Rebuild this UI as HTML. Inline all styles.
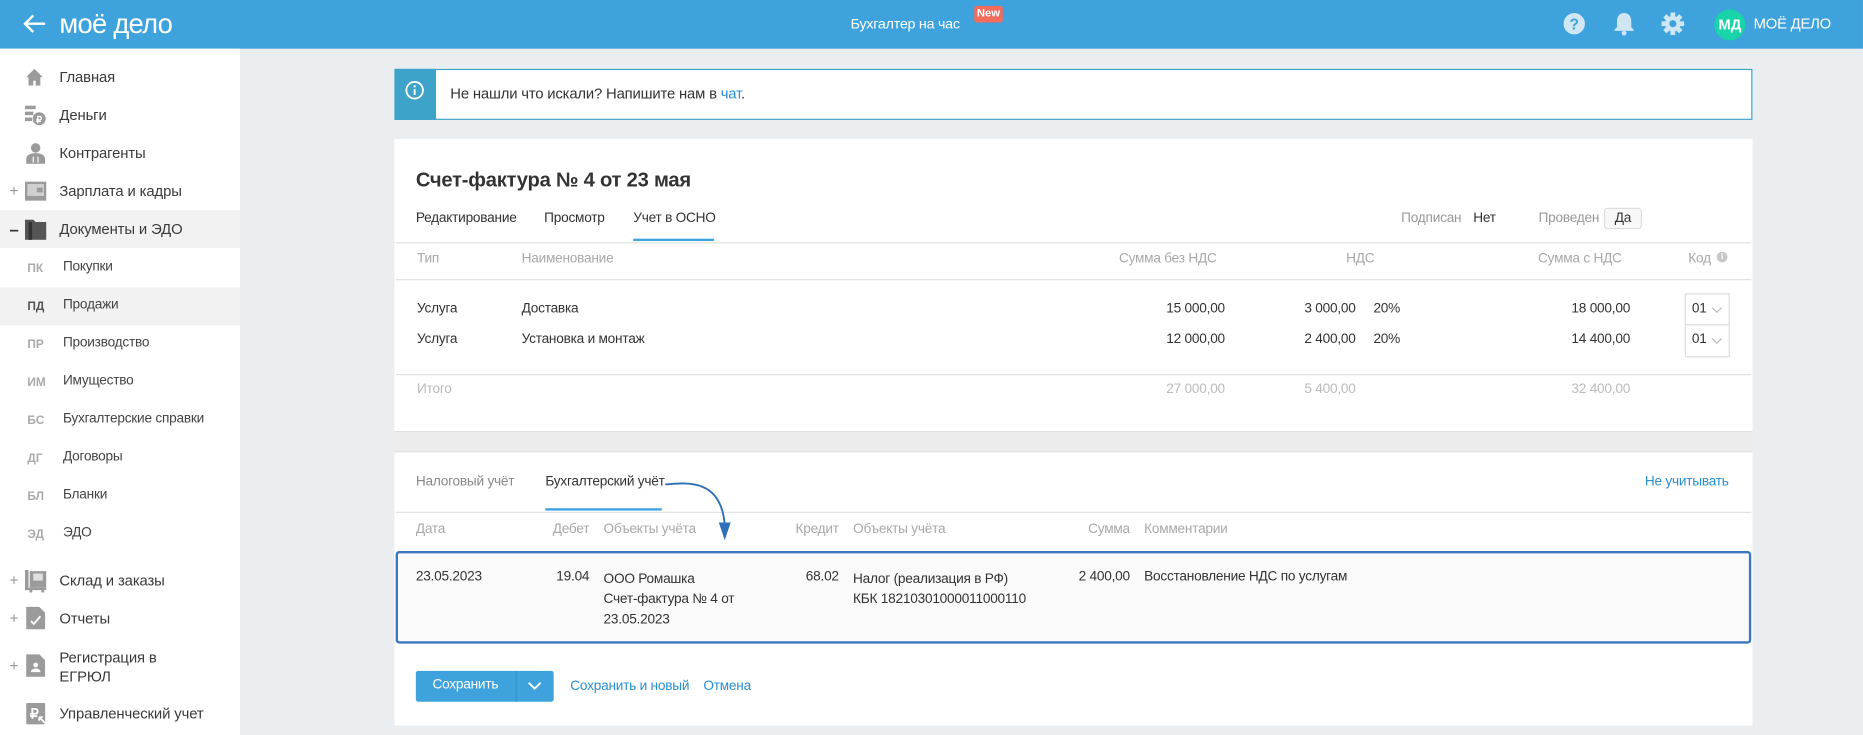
<!DOCTYPE html>
<html><head><meta charset="utf-8">
<style>
html,body{margin:0;padding:0;width:1863px;height:735px;overflow:hidden;background:#eaeef1}
#w{position:absolute;left:0;top:0;width:1568px;height:619px;transform:scale(1.1881,1.1874);transform-origin:0 0;font-family:"Liberation Sans",Arial,sans-serif;color:#333;background:#eaeef1}
.a{position:absolute;white-space:nowrap}
.r{text-align:right}
.g{color:#a8a8a8}
.b{color:#2a8fd0}
.t{font-size:11.5px;letter-spacing:-0.2px}
.sb{font-size:12.5px;color:#3a3a3a;letter-spacing:-0.1px}
.ab{font-size:10px;font-weight:bold;color:#aaa}
</style></head><body><div id="w">
<!-- header -->
<div class="a" style="left:0;top:0;width:1568px;height:41px;background:#3ea3dd"></div>
<svg class="a" style="left:18px;top:11px" width="22" height="18" viewBox="0 0 22 18"><path d="M20 9H3M10 2L3 9l7 7" stroke="#fff" stroke-width="2" fill="none"/></svg>
<div class="a" style="left:50px;top:7px;font-size:23px;color:#fff;letter-spacing:-0.6px">моё дело</div>
<div class="a" style="left:716px;top:13px;font-size:12px;color:#fff;letter-spacing:-0.2px">Бухгалтер на час</div>
<div class="a" style="left:820px;top:5px;width:24px;height:14px;background:#f26b5b;border-radius:2px;color:#fff;font-size:9.5px;font-weight:bold;text-align:center;line-height:14px">New</div>
<svg class="a" style="left:1315px;top:10px" width="20" height="20" viewBox="0 0 20 20"><circle cx="10" cy="10" r="9" fill="#cfe6f5"/><text x="10" y="15" font-size="13" font-weight="bold" fill="#3ea3dd" text-anchor="middle" font-family="Liberation Sans">?</text></svg>
<svg class="a" style="left:1358px;top:10px" width="18" height="20" viewBox="0 0 18 20"><path d="M9 1c-4 0-6 3-6 7v5l-2 2v1h16v-1l-2-2V8c0-4-2-7-6-7z" fill="#cfe6f5"/><circle cx="9" cy="18" r="2" fill="#cfe6f5"/></svg>
<svg class="a" style="left:1398px;top:10px" width="20" height="20" viewBox="0 0 20 20"><g fill="#cfe6f5"><circle cx="10" cy="10" r="6.5"/><rect x="8" y="0.5" width="4" height="19"/><rect x="0.5" y="8" width="19" height="4"/><rect x="8" y="0.5" width="4" height="19" transform="rotate(45 10 10)"/><rect x="8" y="0.5" width="4" height="19" transform="rotate(-45 10 10)"/></g><circle cx="10" cy="10" r="3" fill="#3ea3dd"/></svg>
<div class="a" style="left:1443px;top:8px;width:26px;height:26px;border-radius:50%;background:#19d4a8;color:#fff;font-size:12.5px;font-weight:bold;text-align:center;line-height:26px">МД</div>
<div class="a" style="left:1476px;top:13px;font-size:12.5px;color:#fff;letter-spacing:-0.2px">МОЁ ДЕЛО</div>
<!-- sidebar -->
<div class="a" style="left:0;top:41px;width:202px;height:578px;background:#fff"></div>
<div class="a" style="left:0;top:177px;width:202px;height:32px;background:#f2f2f2"></div>
<div class="a" style="left:0;top:242px;width:202px;height:32px;background:#f2f2f2"></div>
<svg class="a" style="left:21px;top:57px" width="16" height="16" viewBox="0 0 16 16"><path d="M8 1L1 8h2v7h4v-4h2v4h4V8h2z" fill="#9b9b9b"/></svg>
<svg class="a" style="left:21px;top:88px" width="18" height="18" viewBox="0 0 18 18"><g fill="#9b9b9b"><rect x="0" y="1" width="9" height="3"/><rect x="0" y="6" width="7" height="3"/><rect x="0" y="11" width="6" height="3"/><circle cx="12" cy="12" r="5.5"/></g><text x="12" y="15.5" font-size="8" fill="#fff" text-anchor="middle" font-family="Liberation Sans" font-weight="bold">₽</text></svg>
<svg class="a" style="left:22px;top:120px" width="16" height="18" viewBox="0 0 16 18"><g fill="#9b9b9b"><circle cx="8" cy="4.5" r="4"/><path d="M0 18v-4c0-3 3-5 8-5s8 2 8 5v4z"/></g><path d="M6 12v5M10 12v5" stroke="#fff"/></svg>
<svg class="a" style="left:21px;top:152px" width="18" height="18" viewBox="0 0 18 18"><rect x="0" y="1" width="18" height="16" fill="#9b9b9b"/><rect x="2" y="3" width="14" height="10" fill="#d0d0d0"/><rect x="10" y="6" width="5" height="4" fill="#9b9b9b"/></svg>
<svg class="a" style="left:21px;top:185px" width="18" height="17" viewBox="0 0 18 17"><path d="M0 0h7l2 2h9v15H0z" fill="#555"/><rect x="3" y="2" width="3" height="15" fill="#333"/></svg>
<svg class="a" style="left:21px;top:480px" width="18" height="19" viewBox="0 0 18 19"><rect x="0" y="0" width="3" height="16" fill="#9b9b9b"/><rect x="4" y="1" width="14" height="14" fill="#9b9b9b"/><rect x="7" y="3" width="8" height="6" fill="#e0e0e0"/><rect x="0" y="15" width="18" height="2" fill="#9b9b9b"/><circle cx="5" cy="18" r="1.3" fill="#9b9b9b"/><circle cx="15" cy="18" r="1.3" fill="#9b9b9b"/></svg>
<svg class="a" style="left:22px;top:511px" width="16" height="19" viewBox="0 0 16 19"><path d="M0 0h11l5 5v14H0z" fill="#9b9b9b"/><path d="M4 12l2.5 2.5L12 8" stroke="#fff" stroke-width="1.5" fill="none"/></svg>
<svg class="a" style="left:22px;top:551px" width="16" height="19" viewBox="0 0 16 19"><path d="M0 0h11l5 5v14H0z" fill="#9b9b9b"/><circle cx="8" cy="9" r="2" fill="#fff"/><path d="M4 15c0-2 2-3 4-3s4 1 4 3z" fill="#fff"/></svg>
<svg class="a" style="left:22px;top:592px" width="18" height="19" viewBox="0 0 18 19"><rect x="0" y="0" width="16" height="18" rx="1" fill="#9b9b9b"/><text x="7" y="13" font-size="12" fill="#fff" text-anchor="middle" font-family="Liberation Sans" font-weight="bold">₽</text><path d="M11 12l5 5M11 12h3M11 12v3" stroke="#fff" stroke-width="1.5"/></svg>
<div class="a sb" style="left:50px;top:58px">Главная</div>
<div class="a sb" style="left:50px;top:90px">Деньги</div>
<div class="a sb" style="left:50px;top:122px">Контрагенты</div>
<div class="a" style="left:8px;top:153px;color:#999;font-size:13px">+</div>
<div class="a sb" style="left:50px;top:154px">Зарплата и кадры</div>
<div class="a" style="left:8px;top:185px;color:#333;font-size:14px;font-weight:bold">–</div>
<div class="a sb" style="left:50px;top:186px">Документы и ЭДО</div>
<div class="a ab" style="left:23px;top:221px">ПК</div><div class="a t" style="left:53px;top:219px;color:#444">Покупки</div>
<div class="a ab" style="left:23px;top:253px;color:#555">ПД</div><div class="a t" style="left:53px;top:251px;color:#444">Продажи</div>
<div class="a ab" style="left:23px;top:285px">ПР</div><div class="a t" style="left:53px;top:283px;color:#444">Производство</div>
<div class="a ab" style="left:23px;top:317px">ИМ</div><div class="a t" style="left:53px;top:315px;color:#444">Имущество</div>
<div class="a ab" style="left:23px;top:349px">БС</div><div class="a t" style="left:53px;top:347px;color:#444">Бухгалтерские справки</div>
<div class="a ab" style="left:23px;top:381px">ДГ</div><div class="a t" style="left:53px;top:379px;color:#444">Договоры</div>
<div class="a ab" style="left:23px;top:413px">БЛ</div><div class="a t" style="left:53px;top:411px;color:#444">Бланки</div>
<div class="a ab" style="left:23px;top:445px">ЭД</div><div class="a t" style="left:53px;top:443px;color:#444">ЭДО</div>
<div class="a" style="left:8px;top:481px;color:#999;font-size:13px">+</div><div class="a sb" style="left:50px;top:482px">Склад и заказы</div>
<div class="a" style="left:8px;top:513px;color:#999;font-size:13px">+</div><div class="a sb" style="left:50px;top:514px">Отчеты</div>
<div class="a" style="left:8px;top:553px;color:#999;font-size:13px">+</div><div class="a sb" style="left:50px;top:546px;line-height:16px">Регистрация в<br>ЕГРЮЛ</div>
<div class="a sb" style="left:50px;top:594px">Управленческий учет</div>
<!-- info box -->
<div class="a" style="left:332px;top:58px;width:1141px;height:41px;border:1px solid #3ea3c8;background:#fff"></div>
<div class="a" style="left:332px;top:58px;width:35px;height:43px;background:#3ea3c8"></div>
<svg class="a" style="left:341px;top:68px" width="16" height="16" viewBox="0 0 16 16"><circle cx="8" cy="8" r="7" stroke="#fff" stroke-width="1.5" fill="none"/><rect x="7.2" y="7" width="1.6" height="5" fill="#fff"/><circle cx="8" cy="4.7" r="1" fill="#fff"/></svg>
<div class="a" style="left:379px;top:72px;font-size:12.5px;color:#333;letter-spacing:-0.15px">Не нашли что искали? Напишите нам в <span class="b">чат</span>.</div>
<!-- card 1 -->
<div class="a" style="left:332px;top:117px;width:1143px;height:246px;background:#fff"></div>
<div class="a" style="left:350px;top:142px;font-size:17px;font-weight:bold;color:#333;letter-spacing:-0.2px">Счет-фактура № 4 от 23 мая</div>
<div class="a t" style="left:350px;top:178px">Редактирование</div>
<div class="a t" style="left:458px;top:178px">Просмотр</div>
<div class="a t" style="left:533px;top:178px">Учет в ОСНО</div>
<div class="a" style="left:533px;top:201px;width:68px;height:2px;background:#3ea3dd"></div>
<div class="a t" style="left:1178px;top:178px;width:52px;text-align:right;color:#999">Подписан</div>
<div class="a t" style="left:1240px;top:178px">Нет</div>
<div class="a t" style="left:1290px;top:178px;width:56px;text-align:right;color:#999">Проведен</div>
<div class="a t" style="left:1350px;top:175px;width:30px;height:16px;border:1px solid #ddd;border-radius:3px;background:#f8f8f8;text-align:center;line-height:16px">Да</div>
<div class="a" style="left:333px;top:204px;width:1141px;height:1px;background:#e2e2e2"></div>
<div class="a t g" style="left:351px;top:212px">Тип</div>
<div class="a t g" style="left:439px;top:212px">Наименование</div>
<div class="a t g r" style="left:900px;top:212px;width:124px">Сумма без НДС</div>
<div class="a t g" style="left:1133px;top:212px">НДС</div>
<div class="a t g r" style="left:1240px;top:212px;width:125px">Сумма с НДС</div>
<div class="a t g" style="left:1421px;top:212px">Код</div>
<div class="a" style="left:1445px;top:212px;width:9px;height:9px;border-radius:50%;background:#c8c8c8;color:#fff;font-size:7px;font-weight:bold;text-align:center;line-height:9px">i</div>
<div class="a" style="left:333px;top:235px;width:1141px;height:1px;background:#e2e2e2"></div>
<div class="a t" style="left:351px;top:254px">Услуга</div><div class="a t" style="left:439px;top:254px">Доставка</div>
<div class="a t r" style="left:900px;top:254px;width:131px">15 000,00</div>
<div class="a t r" style="left:1040px;top:254px;width:101px">3 000,00</div><div class="a t" style="left:1156px;top:254px">20%</div>
<div class="a t r" style="left:1250px;top:254px;width:122px">18 000,00</div>
<div class="a t" style="left:351px;top:280px">Услуга</div><div class="a t" style="left:439px;top:280px">Установка и монтаж</div>
<div class="a t r" style="left:900px;top:280px;width:131px">12 000,00</div>
<div class="a t r" style="left:1040px;top:280px;width:101px">2 400,00</div><div class="a t" style="left:1156px;top:280px">20%</div>
<div class="a t r" style="left:1250px;top:280px;width:122px">14 400,00</div>
<div class="a" style="left:1418px;top:247px;width:36px;height:52px;border:1px solid #ddd"></div>
<div class="a" style="left:1418px;top:273px;width:37px;height:1px;background:#ddd"></div>
<div class="a t" style="left:1424px;top:254px">01</div>
<div class="a t" style="left:1424px;top:280px">01</div>
<svg class="a" style="left:1440px;top:258px" width="10" height="6" viewBox="0 0 10 6"><path d="M1 1l4 4 4-4" stroke="#bbb" fill="none"/></svg>
<svg class="a" style="left:1440px;top:284px" width="10" height="6" viewBox="0 0 10 6"><path d="M1 1l4 4 4-4" stroke="#bbb" fill="none"/></svg>
<div class="a" style="left:333px;top:315px;width:1141px;height:1px;background:#e2e2e2"></div>
<div class="a t" style="left:351px;top:322px;color:#bbb">Итого</div>
<div class="a t r" style="left:900px;top:322px;width:131px;color:#bbb">27 000,00</div>
<div class="a t r" style="left:1040px;top:322px;width:101px;color:#bbb">5 400,00</div>
<div class="a t r" style="left:1250px;top:322px;width:122px;color:#bbb">32 400,00</div>
<div class="a" style="left:332px;top:363px;width:1143px;height:18px;background:#ececec;border-top:1px solid #e0e0e0;border-bottom:1px solid #e0e0e0;box-sizing:border-box"></div>
<!-- card 2 -->
<div class="a" style="left:332px;top:381px;width:1143px;height:230px;background:#fff"></div>
<div class="a t" style="left:350px;top:400px;color:#888">Налоговый учёт</div>
<div class="a t" style="left:459px;top:400px">Бухгалтерский учёт</div>
<div class="a" style="left:459px;top:428px;width:98px;height:2px;background:#3ea3dd"></div>
<div class="a t b" style="left:1360px;top:400px;width:95px;text-align:right">Не учитывать</div>
<div class="a" style="left:333px;top:431px;width:1141px;height:1px;background:#e2e2e2"></div>
<svg class="a" style="left:555px;top:400px" width="70" height="60" viewBox="0 0 70 60"><path d="M5 8C25 6 52 4 55 42" stroke="#2f6fb5" stroke-width="1.6" fill="none"/><path d="M50 40l5 15 5-15z" fill="#2f6fb5"/></svg>
<div class="a t g" style="left:350px;top:440px">Дата</div>
<div class="a t g r" style="left:440px;top:440px;width:56px">Дебет</div>
<div class="a t g" style="left:508px;top:440px">Объекты учёта</div>
<div class="a t g r" style="left:650px;top:440px;width:56px">Кредит</div>
<div class="a t g" style="left:718px;top:440px">Объекты учёта</div>
<div class="a t g r" style="left:880px;top:440px;width:71px">Сумма</div>
<div class="a t g" style="left:963px;top:440px">Комментарии</div>
<div class="a" style="left:333px;top:464px;width:1137px;height:74px;border:2px solid #3a78c0;border-radius:3px;background:#fafafa"></div>
<div class="a t" style="left:350px;top:480px">23.05.2023</div>
<div class="a t r" style="left:440px;top:480px;width:56px">19.04</div>
<div class="a t" style="left:508px;top:480px;line-height:17px">ООО Ромашка<br>Счет-фактура № 4 от<br>23.05.2023</div>
<div class="a t r" style="left:650px;top:480px;width:56px">68.02</div>
<div class="a t" style="left:718px;top:480px;line-height:17px">Налог (реализация в РФ)<br>КБК 18210301000011000110</div>
<div class="a t r" style="left:880px;top:480px;width:71px">2 400,00</div>
<div class="a t" style="left:963px;top:480px">Восстановление НДС по услугам</div>
<div class="a" style="left:350px;top:565px;width:116px;height:26px;background:#3ea3dd;border-radius:2px"></div>
<div class="a" style="left:434px;top:565px;width:1px;height:26px;background:#3596d0"></div>
<div class="a" style="left:364px;top:571px;font-size:11.5px;color:#fff;letter-spacing:-0.2px">Сохранить</div>
<svg class="a" style="left:444px;top:574px" width="12" height="8" viewBox="0 0 12 8"><path d="M1 1l5 5 5-5" stroke="#fff" stroke-width="1.6" fill="none"/></svg>
<div class="a t b" style="left:480px;top:572px">Сохранить и новый</div>
<div class="a t b" style="left:592px;top:572px">Отмена</div>
</div></body></html>
